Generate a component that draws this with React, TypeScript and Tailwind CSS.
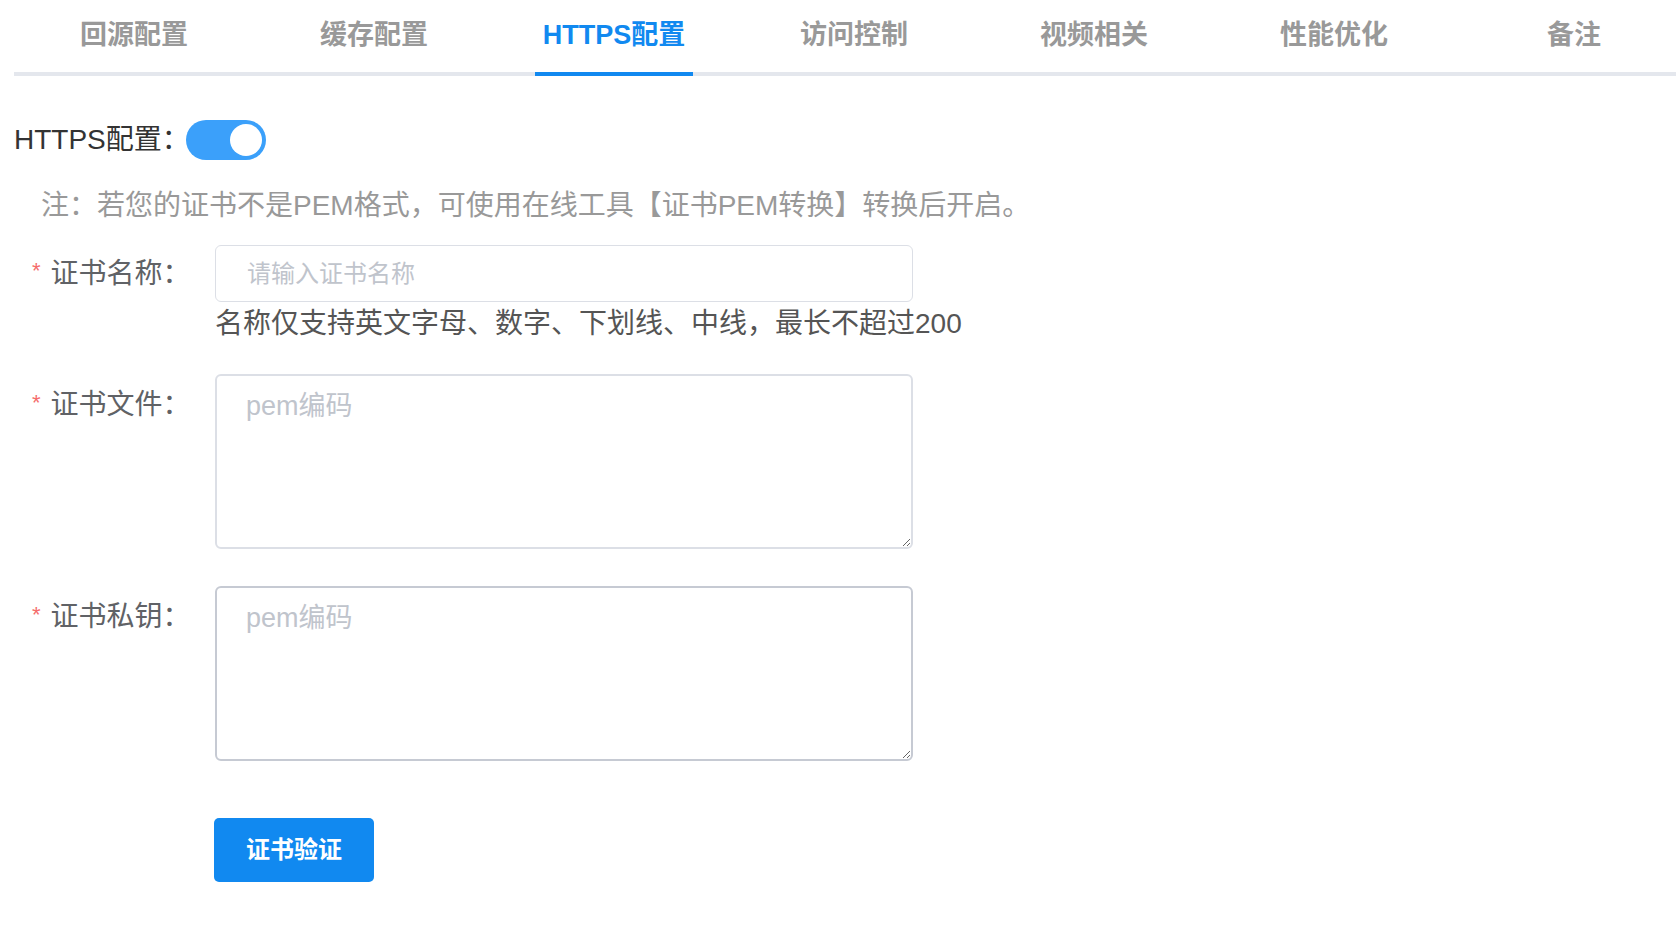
import React from "react";

const tabs = ["回源配置", "缓存配置", "HTTPS配置", "访问控制", "视频相关", "性能优化", "备注"];

export default function App() {
  return (
    <div
      className="w-[1676px] h-[926px] overflow-hidden bg-white"
      style={{ fontFamily: '"Liberation Sans", "Noto Sans CJK SC", sans-serif' }}
    >
      {/* Tabs */}
      <div className="flex ml-[14px] w-[1680px] border-b-4 border-[#e4e7ed]">
        {tabs.map((t, i) => {
          const active = i === 2;
          return (
            <div key={t} className="w-[240px] shrink-0 flex justify-center">
              <div
                className={
                  "h-[76px] -mb-[4px] px-[8px] pt-[20px] border-b-4 text-[27px] leading-[30px] font-bold whitespace-nowrap " +
                  (active ? "border-[#1189f0] text-[#1189f0]" : "border-transparent text-[#999999]")
                }
              >
                {t}
              </div>
            </div>
          );
        })}
      </div>

      {/* HTTPS toggle */}
      <div className="flex items-center ml-[14px] mt-[44px] h-[40px]">
        <span className="text-[28px] leading-[40px] text-[#333333]">HTTPS配置：</span>
        <div className="-ml-[4px] w-[80px] h-[40px] rounded-full bg-[#3ba0fa] flex items-center justify-end pr-[4px]">
          <div className="w-[32px] h-[32px] rounded-full bg-white" />
        </div>
      </div>

      {/* Note */}
      <div className="ml-[41px] mt-[26px] text-[28px] leading-[40px] text-[#999999] whitespace-nowrap">
        注：若您的证书不是PEM格式，可使用在线工具【证书PEM转换】转换后开启。
      </div>

      {/* Row 1 */}
      <div className="flex mt-[19px]">
        <div className="w-[215px] shrink-0 pl-[32px] flex items-center h-[57px] text-[28px] text-[#606266]">
          <span className="text-[#f56c6c] text-[22px] mr-[10px] -mt-[6px]">*</span>
          <span>证书名称：</span>
        </div>
        <div className="flex flex-col">
          <input
            className="w-[698px] h-[57px] border border-[#dcdfe6] rounded-[6px] pl-[31px] text-[24px] outline-none placeholder:text-[#c0c4cc]"
            placeholder="请输入证书名称"
          />
          <div className="mt-[2px] text-[28px] leading-[40px] text-[#555555] whitespace-nowrap">
            名称仅支持英文字母、数字、下划线、中线，最长不超过200
          </div>
        </div>
      </div>

      {/* Row 2 */}
      <div className="flex mt-[30px]">
        <div className="w-[215px] shrink-0 pl-[32px] flex items-center h-[62px] text-[28px] text-[#606266]">
          <span className="text-[#f56c6c] text-[22px] mr-[10px] -mt-[6px]">*</span>
          <span>证书文件：</span>
        </div>
        <textarea
          className="w-[698px] h-[175px] border-2 border-[#dcdfe6] rounded-[6px] pl-[29px] pt-[10px] text-[27px] leading-[40px] outline-none placeholder:text-[#c0c4cc]"
          placeholder="pem编码"
        />
      </div>

      {/* Row 3 */}
      <div className="flex mt-[37px]">
        <div className="w-[215px] shrink-0 pl-[32px] flex items-center h-[62px] text-[28px] text-[#606266]">
          <span className="text-[#f56c6c] text-[22px] mr-[10px] -mt-[6px]">*</span>
          <span>证书私钥：</span>
        </div>
        <textarea
          className="w-[698px] h-[175px] border-2 border-[#c6cad3] rounded-[6px] pl-[29px] pt-[10px] text-[27px] leading-[40px] outline-none placeholder:text-[#c0c4cc]"
          placeholder="pem编码"
        />
      </div>

      {/* Button */}
      <div className="ml-[214px] mt-[57px]">
        <button className="w-[160px] h-[64px] rounded-[5px] bg-[#1189f0] text-white text-[24px] font-bold">
          证书验证
        </button>
      </div>
    </div>
  );
}
